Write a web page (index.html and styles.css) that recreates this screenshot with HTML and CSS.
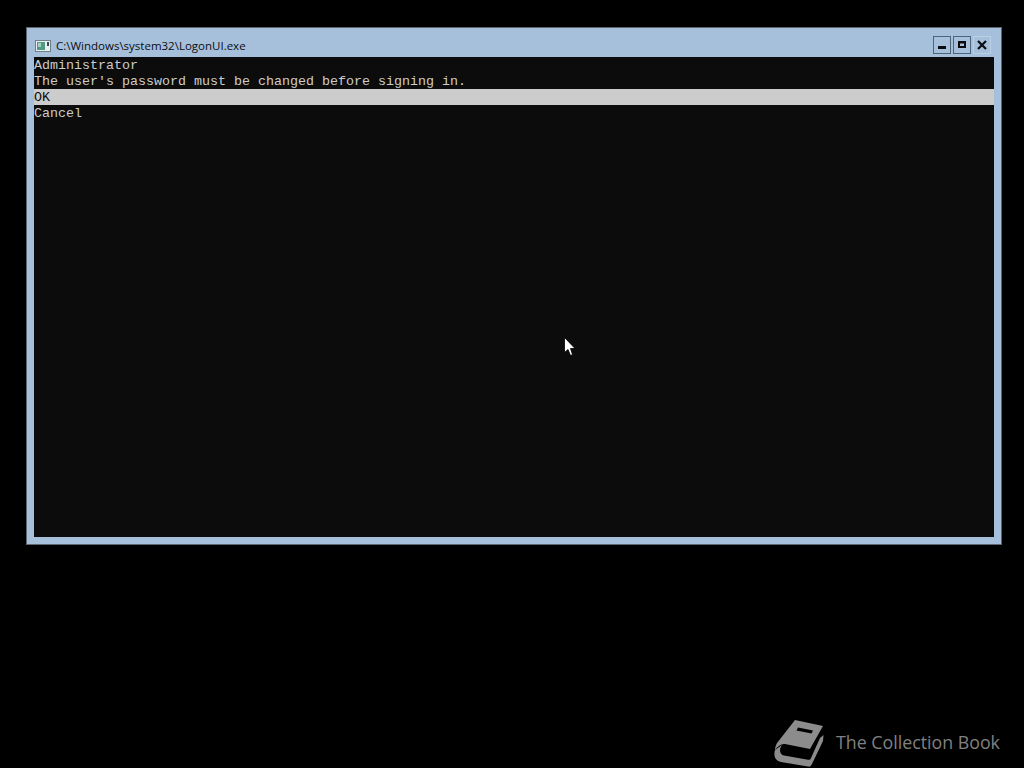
FILE: index.html
```html
<!DOCTYPE html>
<html lang="en">
<head>
<meta charset="utf-8">
<title>LogonUI</title>
<link rel="stylesheet" href="styles.css">
</head>
<body>
<div class="window">
  <div class="titlebar">
    <svg class="app-icon" width="16" height="14" viewBox="0 0 16 14">
      <rect x="0.5" y="1.5" width="15" height="11" fill="#e8eef2" stroke="#6f7f88"/>
      <rect x="2" y="3" width="8" height="8" fill="#4f9a80"/>
      <rect x="3" y="4" width="3" height="4" fill="#a8d0c0"/>
      <rect x="12" y="3" width="2" height="4" fill="#3d4b52"/>
    </svg>
    <span class="title">C:\Windows\system32\LogonUI.exe</span>
    <div class="controls">
      <button class="ctl ctl-boxed"><svg width="10" height="10" viewBox="0 0 10 10"><rect x="1" y="6" width="8" height="3" fill="#0c0c10"/></svg></button>
      <button class="ctl ctl-boxed"><svg width="10" height="10" viewBox="0 0 10 10"><path d="M1 1h8v7H1z M3 3.500v2.500h4V3.500z" fill="#0c0c10" fill-rule="evenodd"/></svg></button>
      <button class="ctl ctl-close"><svg width="10" height="10" viewBox="0 0 10 10"><path d="M1 1l8 8M9 1l-8 8" stroke="#0c0c10" stroke-width="2.200" fill="none"/></svg></button>
    </div>
  </div>
  <div class="console">
    <div class="line">Administrator</div>
    <div class="line">The user's password must be changed before signing in.</div>
    <div class="line selected">OK</div>
    <div class="line">Cancel</div>
  </div>
</div>

<svg class="cursor" width="12" height="20" viewBox="0 0 12 20">
  <path d="M0.500 0.500V15.500L4 12.500L6.500 18.500L8.500 17.500L6.500 11.500H11Z" fill="#fff" stroke="#000" stroke-width="0.800"/>
</svg>

<div class="watermark">
  <svg class="book" width="52" height="48" viewBox="0 0 52 48">
    <path d="M22 1L50 7L37 30L12 25C8 24.500 5 27 2 31C2 28 3 26 4 24Z" fill="#8c8c8c"/>
    <path d="M2 31C0 38 3 42 8 43L35 47.500C37 48 38 47 39 45L50 22L50.500 16L47 19L38 39C37.500 40.500 37 41 35 40.700L11 36.500C7 36 5.500 31 9 26L2 31Z" fill="#8c8c8c"/>
    <path d="M25 8.500L40 11.500L38.500 14.500L23.500 11.500Z" fill="#000"/>
  </svg>
  <span class="wm-text">The Collection Book</span>
</div>
</body>
</html>
```
FILE: styles.css
```css
html, body {
  margin: 0;
  height: 100%;
  background: #000;
  overflow: hidden;
}

body {
  position: relative;
  padding: 27px 22px 0 26px;
  box-sizing: border-box;
}

.window {
  height: 518px;
  box-sizing: border-box;
  display: flex;
  flex-direction: column;
  background: #a6c0dc;
  border: 1px solid #5c6670;
  padding: 0 7px 7px 7px;
}

.titlebar {
  height: 29px;
  flex: none;
  display: flex;
  align-items: center;
  padding: 6px 1px 0 1px;
  box-sizing: border-box;
}

.app-icon {
  flex: none;
  margin-right: 5px;
}

.title {
  font-family: "Open Sans", sans-serif;
  font-size: 11.5px;
  color: #0c0c10;
  white-space: nowrap;
}

.controls {
  margin-left: auto;
  display: flex;
  gap: 2px;
  margin-right: 2px;
  margin-bottom: 1px;
}

.ctl {
  width: 18px;
  height: 18px;
  padding: 0;
  display: flex;
  align-items: center;
  justify-content: center;
  background: transparent;
  border: 1px solid transparent;
}

.ctl-boxed {
  border-color: #4f6478;
}

.ctl-close {
  border-color: #bcd0e4;
}

.console {
  flex: 1;
  background: #0c0c0c;
  font-family: "Liberation Mono", monospace;
  font-size: 13.33px;
  line-height: 18px;
  color: #cccccc;
}

.line {
  height: 16px;
  white-space: pre;
}

.selected {
  background: #cccccc;
  color: #0c0c0c;
}

.cursor {
  position: absolute;
  left: 564px;
  top: 337px;
}

.watermark {
  position: absolute;
  left: 773px;
  top: 719px;
  display: flex;
  align-items: center;
  gap: 11px;
}

.book {
  display: block;
}

.wm-text {
  font-family: "Open Sans", sans-serif;
  font-size: 17.800px;
  color: #808080;
  white-space: nowrap;
  margin-top: -2px;
}
```
